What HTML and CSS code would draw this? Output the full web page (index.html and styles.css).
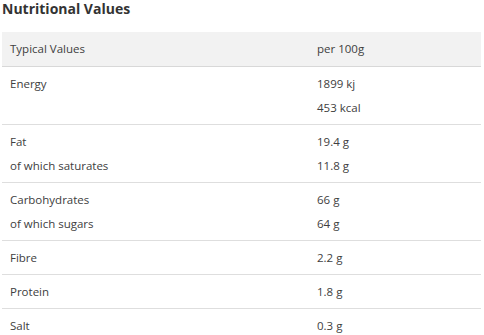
FILE: index.html
```html
<!DOCTYPE html>
<html lang="en">
<head>
<meta charset="utf-8">
<title>Nutritional Values</title>
<link rel="stylesheet" href="styles.css">
</head>
<body>
<section class="nutrition">
  <h2 class="nutrition__title">Nutritional Values</h2>
  <div class="nutrition__table">
    <div class="row row--head">
      <div class="cell"><span>Typical Values</span></div>
      <div class="cell"><span>per 100g</span></div>
    </div>
    <div class="row">
      <div class="cell"><span>Energy</span></div>
      <div class="cell"><span>1899 kj</span><span>453 kcal</span></div>
    </div>
    <div class="row">
      <div class="cell"><span>Fat</span><span>of which saturates</span></div>
      <div class="cell"><span>19.4 g</span><span>11.8 g</span></div>
    </div>
    <div class="row">
      <div class="cell"><span>Carbohydrates</span><span>of which sugars</span></div>
      <div class="cell"><span>66 g</span><span>64 g</span></div>
    </div>
    <div class="row">
      <div class="cell"><span>Fibre</span></div>
      <div class="cell"><span>2.2 g</span></div>
    </div>
    <div class="row">
      <div class="cell"><span>Protein</span></div>
      <div class="cell"><span>1.8 g</span></div>
    </div>
    <div class="row">
      <div class="cell"><span>Salt</span></div>
      <div class="cell"><span>0.3 g</span></div>
    </div>
  </div>
</section>
</body>
</html>
```
FILE: styles.css
```css
html, body {
  margin: 0;
  padding: 0;
  background: #ffffff;
}
body {
  font-family: "Open Sans", "Noto Sans", sans-serif;
  color: #404040;
}
.nutrition {
  padding: 0 3px 0 2px;
}
.nutrition__title {
  margin: 0;
  font-family: "Open Sans", sans-serif;
  font-weight: 700;
  font-size: 14px;
  line-height: 18px;
  color: #333333;
  height: 32px;
}
.nutrition__table {
  display: flex;
  flex-direction: column;
}
.row {
  display: grid;
  grid-template-columns: 307px 1fr;
  border-bottom: 1px solid #dedede;
  padding: 5px 0 4px;
}
.row--head {
  background: #f2f2f2;
  padding: 5px 0 5px;
  border-bottom-color: #d8d8d8;
}
.cell {
  display: flex;
  flex-direction: column;
  padding-left: 8px;
}
.cell span {
  font-size: 11.5px;
  line-height: 24px;
  white-space: nowrap;
}
```
